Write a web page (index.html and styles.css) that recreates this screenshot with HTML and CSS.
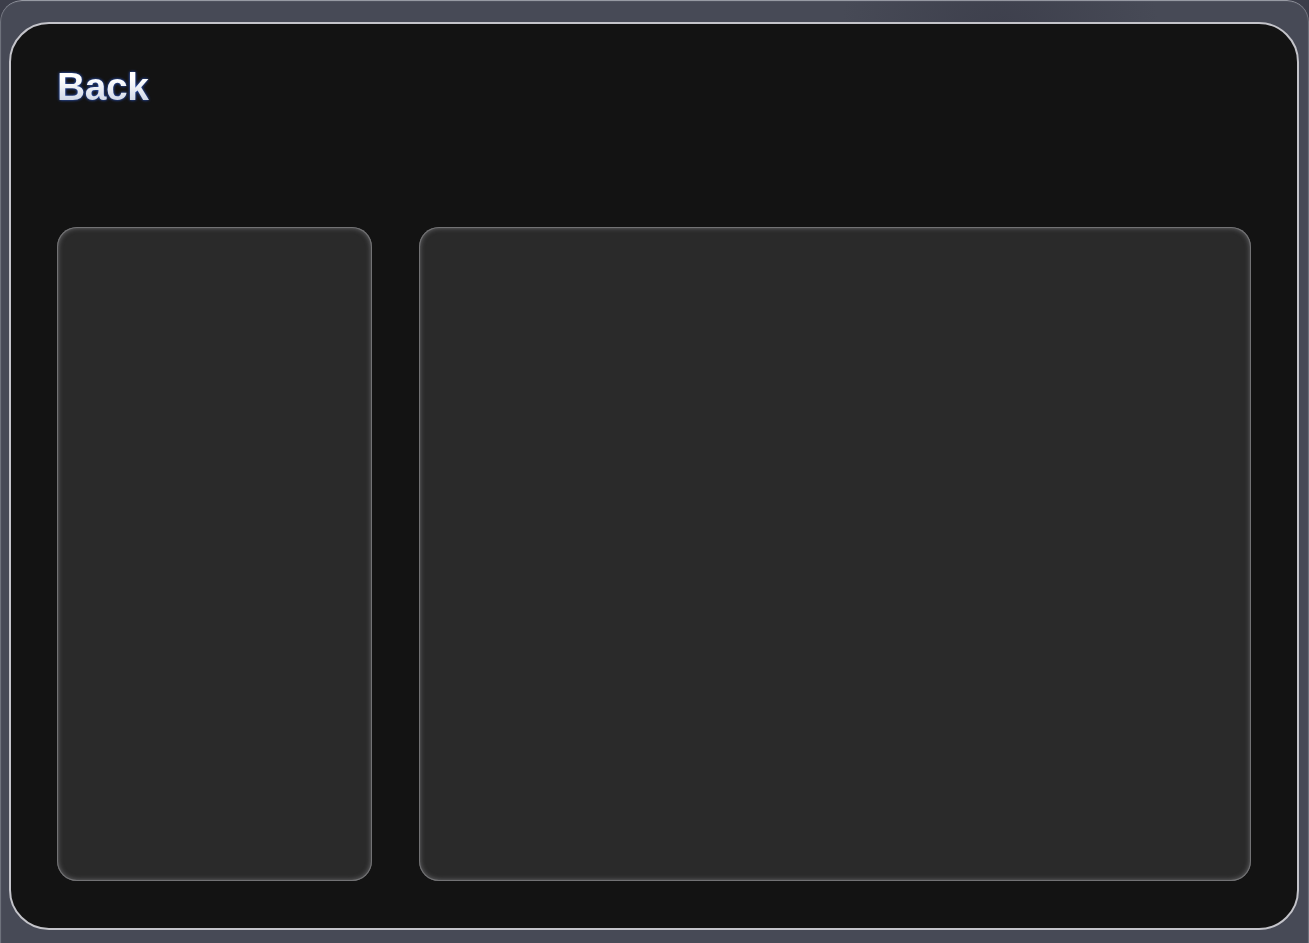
FILE: index.html
```html
<!DOCTYPE html>
<html lang="en">
<head>
<meta charset="utf-8">
<title>Back</title>
<link rel="stylesheet" href="styles.css">
</head>
<body>
<div class="screen">
  <main class="panel">
    <header class="panel-head">
      <a class="back" href="#">Back</a>
    </header>
    <section class="cards">
      <div class="card card-side"></div>
      <div class="card card-main"></div>
    </section>
  </main>
</div>
</body>
</html>
```
FILE: styles.css
```css
html, body {
  margin: 0;
  padding: 0;
  height: 100%;
}
body {
  background: #3c3e4a;
  font-family: "Liberation Sans", "Inter", sans-serif;
  overflow: hidden;
}
.screen {
  box-sizing: border-box;
  height: 943px;
  width: 1309px;
  padding: 22px 10px 13px 9px;
  background:
    radial-gradient(circle at 1000px 40px, rgba(60,62,75,0.9) 0, rgba(60,62,75,0.0) 160px),
    #474a56;
  border-radius: 22px 22px 0 0;
  box-shadow: inset 0 2px 1px -1px rgba(220,222,230,0.6), inset 2px 0 1px -1px rgba(220,222,230,0.3), inset -2px 0 1px -1px rgba(220,222,230,0.3);
}
.panel {
  box-sizing: border-box;
  height: 908px;
  background: #131313;
  border: 2px solid #c4c4ca;
  border-radius: 40px;
  padding: 36px 46px 47px 46px;
  display: flex;
  flex-direction: column;
}
.panel-head {
  height: 167px;
  flex: none;
}
.back {
  display: inline-block;
  font-size: 39px;
  font-weight: 700;
  letter-spacing: -0.4px;
  text-decoration: none;
  line-height: 54px;
  background: linear-gradient(180deg, #ffffff 35%, #b4c0d8 100%);
  -webkit-background-clip: text;
  background-clip: text;
  color: transparent;
  filter: drop-shadow(0 0 1.5px rgba(50,100,230,1));
}
.cards {
  flex: 1;
  display: flex;
  gap: 47px;
}
.card {
  background: #2a2a2a;
  border-radius: 20px;
  box-shadow: inset 0 0 0 1px #727274, inset 0 0 5px 1px rgba(150,150,155,0.6);
}
.card-side {
  width: 315px;
  flex: none;
}
.card-main {
  flex: 1;
}
```
